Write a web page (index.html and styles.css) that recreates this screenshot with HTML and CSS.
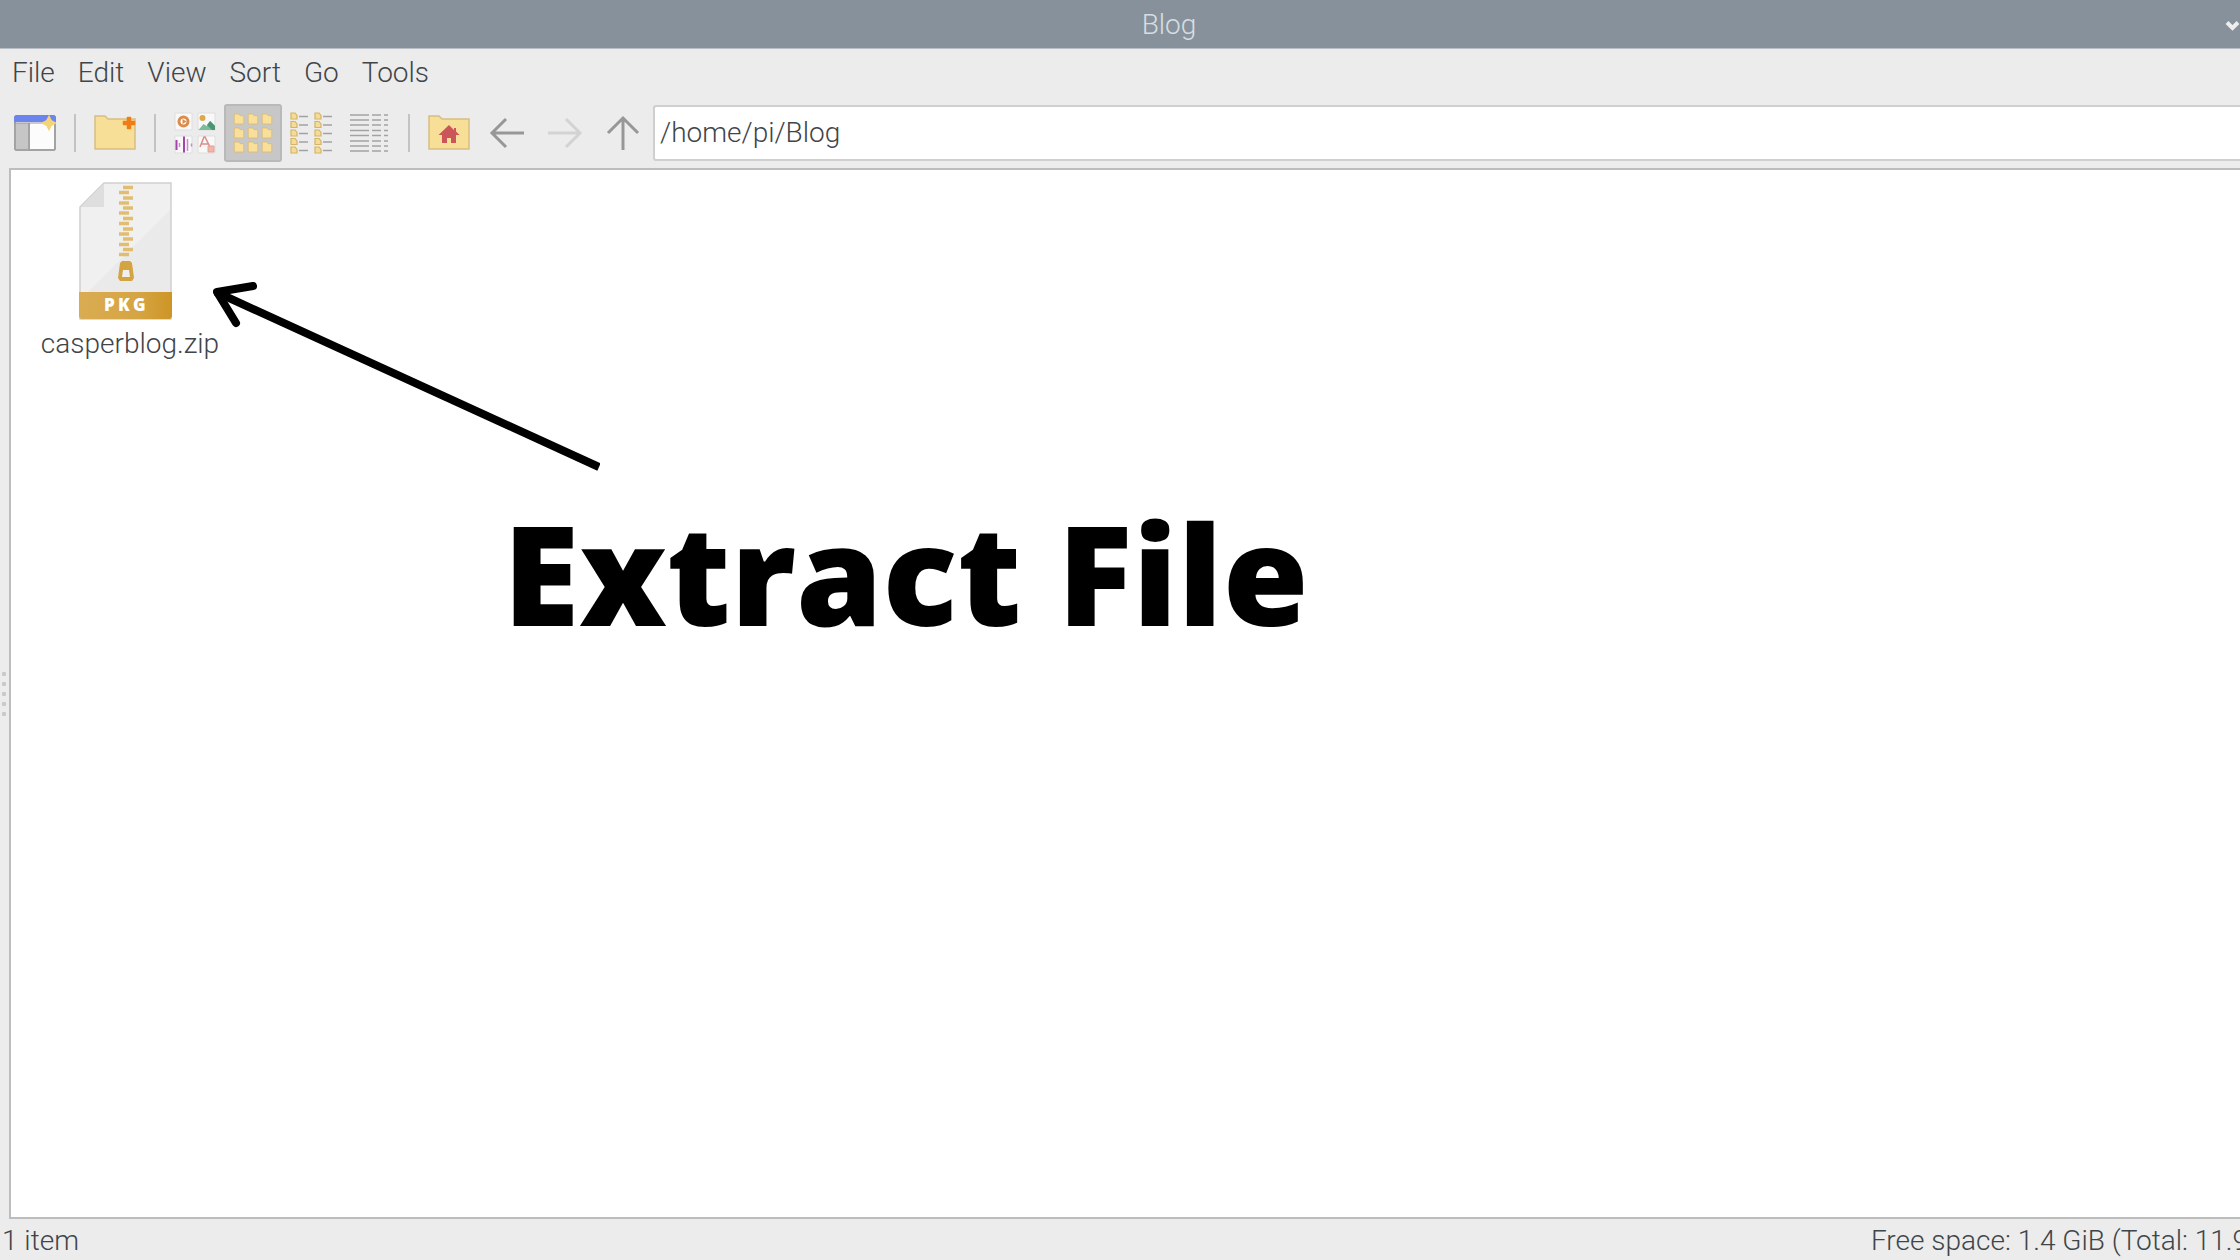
FILE: index.html
```html
<!DOCTYPE html>
<html lang="en">
<head>
<meta charset="utf-8">
<title>Blog</title>
<link rel="stylesheet" href="styles.css">
</head>
<body>
<svg class="defs" width="0" height="0" aria-hidden="true">
  <defs>
    <linearGradient id="band"><stop offset="0" stop-color="#daac52"/><stop offset=".65" stop-color="#d5a443"/><stop offset="1" stop-color="#cd9525"/></linearGradient>
    <symbol id="mini" viewBox="0 0 10 10"><path d="M1 .8h4l1 1.400h3v7H1z" fill="#f9df98" stroke="#d9bd7c" stroke-width=".8"/></symbol>
    <symbol id="leaf" viewBox="0 0 8 8"><path d="M1 1h4l2 2.500v3.500H1z" fill="#f5dc94" stroke="#d4b468" stroke-width="1.200"/></symbol>
    <g id="folder"><path d="M1 1h10l3 3h27v30H1z" fill="#f8df98" stroke="#d8be80" stroke-width="1.500"/></g>
  </defs>
</svg>
<div class="window">
  <header class="titlebar">
    <h1 class="title">Blog</h1>
    <button class="minimise" aria-label="Minimise"><svg width="15" height="12" viewBox="0 0 15 12"><path d="M2 3.500l5.500 5.500L13 3.500" fill="none" stroke="#eee" stroke-width="4"/></svg></button>
  </header>
  <nav class="menubar">
    <button>File</button><button>Edit</button><button>View</button><button>Sort</button><button>Go</button><button>Tools</button>
  </nav>
  <div class="toolbar">
    <button class="tool" aria-label="New window"><svg width="42" height="36" viewBox="0 0 42 36">
      <path d="M2 1h38l1 1v32l-1 1H2l-1-1V2z" fill="#fcfcfc" stroke="#a3a3a3" stroke-width="2"/><path d="M2 8h13v26H2z" fill="#c6c6c6"/><path d="M15 8v26" stroke="#a3a3a3" stroke-width="2"/><path d="M2 0h38l2 2v5H0V2z" fill="#6c84ee"/><path d="M0 8h42" stroke="#9696a6"/><path d="M35 2l2 4 4 2-4 2-2 4-2-4-4-2 4-2z" fill="#f4d478" stroke="#f4d478" stroke-width="2"/></svg></button>
    <span class="rule"></span>
    <button class="tool" aria-label="New folder"><svg width="42" height="36" viewBox="0 0 42 36"><use href="#folder"/><path d="M33.500 2.500h3v4h4v3h-4v4h-3v-4h-4v-3h4z" fill="#ef7d17" stroke="#ef7d17" stroke-width="1.500" stroke-linejoin="round"/></svg></button>
    <span class="rule"></span>
    <button class="tool" aria-label="Thumbnail view"><svg width="42" height="42" viewBox="0 0 42 42">
      <g fill="#f8f8f8" stroke="#dedede"><path d="M1 1h17v17H1zM24 1h17v17H24zM1 24h17v17H1zM24 24h17v17H24z"/></g>
      <circle cx="9.500" cy="9.500" r="4.500" fill="#fff" stroke="#dc8b49" stroke-width="3"/><path d="M8.500 7l4 2.500-4 2.500z" fill="#dc8b49"/>
      <circle cx="28.500" cy="6" r="3" fill="#dca84b"/><path d="M24.500 18l5-6 3 2 4-5 4.500 5v4z" fill="#7bbd99"/><path d="M33 13l3-4 5 5v4h-3z" fill="#4c9572"/>
      <path d="M2.500 28v10M10 24.500v16" stroke="#a544aa" stroke-width="2"/><path d="M5.500 31v4M13.500 27v12M17.500 31.500v3" stroke="#c88acb" stroke-width="1.500"/>
      <path d="M26 35l4-10h1l5 10M27.500 32h7" fill="none" stroke="#d98d88" stroke-width="1.500"/><path d="M34 34h6v6h-6z" fill="#f0b5ab" stroke="#e5a096"/></svg></button>
    <button class="tool active" aria-label="Icon view" aria-pressed="true"><svg width="40" height="40" viewBox="0 0 40 40">
      <use href="#mini" x="0" y="0" width="12" height="12"/><use href="#mini" x="14" y="0" width="12" height="12"/><use href="#mini" x="28" y="0" width="12" height="12"/>
      <use href="#mini" x="0" y="14" width="12" height="12"/><use href="#mini" x="14" y="14" width="12" height="12"/><use href="#mini" x="28" y="14" width="12" height="12"/>
      <use href="#mini" x="0" y="28" width="12" height="12"/><use href="#mini" x="14" y="28" width="12" height="12"/><use href="#mini" x="28" y="28" width="12" height="12"/></svg></button>
    <button class="tool" aria-label="Compact view"><svg width="42" height="42" viewBox="0 0 42 42">
      <g id="col"><use href="#leaf" x="0" y="0" width="8" height="8"/><use href="#leaf" x="0" y="8.500" width="8" height="8"/><use href="#leaf" x="0" y="17" width="8" height="8"/><use href="#leaf" x="0" y="25.500" width="8" height="8"/><use href="#leaf" x="0" y="34" width="8" height="8"/>
      <path d="M9 4.500h9M9 13h9M9 21.500h9M9 30h9M9 38.500h9" stroke="#a2a2a2" stroke-width="1.500"/></g><use href="#col" x="24"/></svg></button>
    <button class="tool" aria-label="Detailed list view"><svg width="40" height="40" viewBox="0 0 40 40">
      <path d="M1 2h19m3 0h9m3 0h4M1 7h19m3 0h9m3 0h4M1 12h19m3 0h9m3 0h4M1 17.500h19m3 0h9m3 0h4M1 22.500h19m3 0h9m3 0h4M1 28h19m3 0h9m3 0h4M1 33h19m3 0h9m3 0h4M1 38h19m3 0h9m3 0h4" stroke="#a2a2a2" stroke-width="1.700"/></svg></button>
    <span class="rule"></span>
    <button class="tool" aria-label="Home"><svg width="42" height="36" viewBox="0 0 42 36"><use href="#folder"/><path d="M21 10L10.500 20H14v8h5v-5h4v5h5v-8h3.500l-3.500-3.500V13h-2v2z" fill="#cb5558"/></svg></button>
    <button class="tool" aria-label="Back"><svg width="36" height="36" viewBox="0 0 36 36"><path d="M35 18H3M17 4L3 18l14 14" fill="none" stroke="#979797" stroke-width="3"/></svg></button>
    <button class="tool" aria-label="Forward" disabled><svg width="36" height="36" viewBox="0 0 36 36"><path d="M1 18h32M19 4l14 14-14 14" fill="none" stroke="#d3d3d3" stroke-width="3"/></svg></button>
    <button class="tool" aria-label="Parent folder"><svg width="36" height="36" viewBox="0 0 36 36"><path d="M18 35V3M3 18L18 3l15 15" fill="none" stroke="#979797" stroke-width="3"/></svg></button>
    <input class="path" type="text" value="/home/pi/Blog" aria-label="Location">
  </div>
  <main class="content">
    <div class="splitter"><i></i><i></i><i></i><i></i><i></i></div>
    <section class="files">
      <a class="file" href="#casperblog">
        <svg width="102" height="138" viewBox="0 0 102 138">
          <path d="M1 25L25 1h67v136H1z" fill="#f0f0f0" stroke="#cfcfcf" stroke-width="1.500"/>
          <path d="M91 28v82H9z" fill="#eaeaea"/><path d="M1.500 25L25 1.500V25z" fill="#dedede"/>
          <path d="M44 5.500h10M44 16h10M44 26h10M44 36.500h10M44 47h10M44 57h10M44 67.500h10" stroke="#e1bd72" stroke-width="3.500"/>
          <path d="M40 10.500h10M40 21h10M40 31h10M40 41.500h10M40 52h10M40 62.500h10M40 72.500h10" stroke="#e1bd72" stroke-width="3.500"/>
          <path d="M43 79h8l2 2 2 15-2 3H41l-2-3 2-15z" fill="#d4a442"/><path d="M44 88h6l1 7h-8z" fill="#f0f0f0"/>
          <path d="M0 110h93v25l-2 2H2l-2-2z" fill="url(#band)"/>
          <text class="badge" x="25" y="129">P</text><text class="badge" x="39" y="129">K</text><text class="badge" x="54" y="129">G</text>
        </svg>
        <span>casperblog.zip</span>
      </a>
    </section>
  </main>
  <footer class="status"><span>1 item</span><span class="space">Free space: 1.4 GiB (Total: 11.9</span></footer>
</div>
<div class="note">
  <svg width="400" height="200" viewBox="0 0 400 200" fill="none" stroke="#000" stroke-width="8"><path d="M16 12l383 175"/><path d="M53 6L17 12l19 31" stroke-linecap="round" stroke-linejoin="round"/></svg>
  <p>Extract File</p>
</div>
</body>
</html>
```
FILE: styles.css
```css
* { box-sizing: border-box; }
body {
  margin: 0;
  overflow: hidden;
  color: #3f4549;
  font: 300 28px/36px Roboto, sans-serif;
}
button {
  padding: 0;
  border: 0;
  background: none;
  color: inherit;
  font: inherit;
}
svg { display: block; }
.defs { position: absolute; }
.window {
  display: flex;
  flex-direction: column;
  height: 100vh;
  background: #ececec;
}
.titlebar {
  display: flex;
  align-items: center;
  height: 49px;
  padding: 1px 0 0 98px;
  border-bottom: 1px solid #b9bdc5;
  background: #87919b;
  color: #d8dde1;
}
.title {
  flex: 1;
  margin: 0;
  padding-left: 15px;
  font: inherit;
  text-align: center;
}
.menubar {
  display: flex;
  gap: 23px;
  padding: 6px 12px;
}
.toolbar {
  display: flex;
  align-items: center;
  height: 71px;
  padding-left: 6px;
}
.tool {
  display: grid;
  flex: none;
  place-items: center;
  width: 58px;
  height: 58px;
}
.tool.active {
  border: 2px solid #b9b9b9;
  border-radius: 3px;
  background: #c7c7c7;
}
.rule {
  flex: none;
  width: 2px;
  height: 38px;
  margin: 0 10px;
  background: #c3c3c3;
}
.path {
  flex: 1;
  height: 56px;
  margin-left: 1px;
  padding: 0 5px;
  border: 2px solid #cfcfcf;
  border-right: 0;
  border-radius: 3px 0 0 3px;
  background: #fff;
  color: inherit;
  font: inherit;
}
.content {
  display: flex;
  flex: 1;
}
.splitter {
  display: flex;
  flex-direction: column;
  align-items: center;
  justify-content: center;
  gap: 6px;
  width: 9px;
  padding-right: 2px;
}
.splitter i {
  width: 4px;
  height: 4px;
  border-radius: 1px;
  background: #c9c9c6;
}
.files {
  flex: 1;
  padding: 12px 0;
  border: 2px solid #bdbdbd;
  border-right: 0;
  background: #fff;
}
.file {
  display: flex;
  flex-direction: column;
  align-items: center;
  gap: 6px;
  width: 238px;
  color: inherit;
  text-decoration: none;
}
.badge {
  fill: #fff;
  font: 800 17px "Open Sans", sans-serif;
}
.status {
  display: flex;
  justify-content: space-between;
  height: 41px;
  padding: 4px 0 0 2px;
  overflow: hidden;
  white-space: nowrap;
}
.space { margin-right: -8px; }
.note {
  position: absolute;
  top: 280px;
  left: 200px;
}
.note p {
  margin: 0 0 0 303px;
  color: #000;
  font: 800 139px/184px "Open Sans", sans-serif;
  white-space: nowrap;
}
```
